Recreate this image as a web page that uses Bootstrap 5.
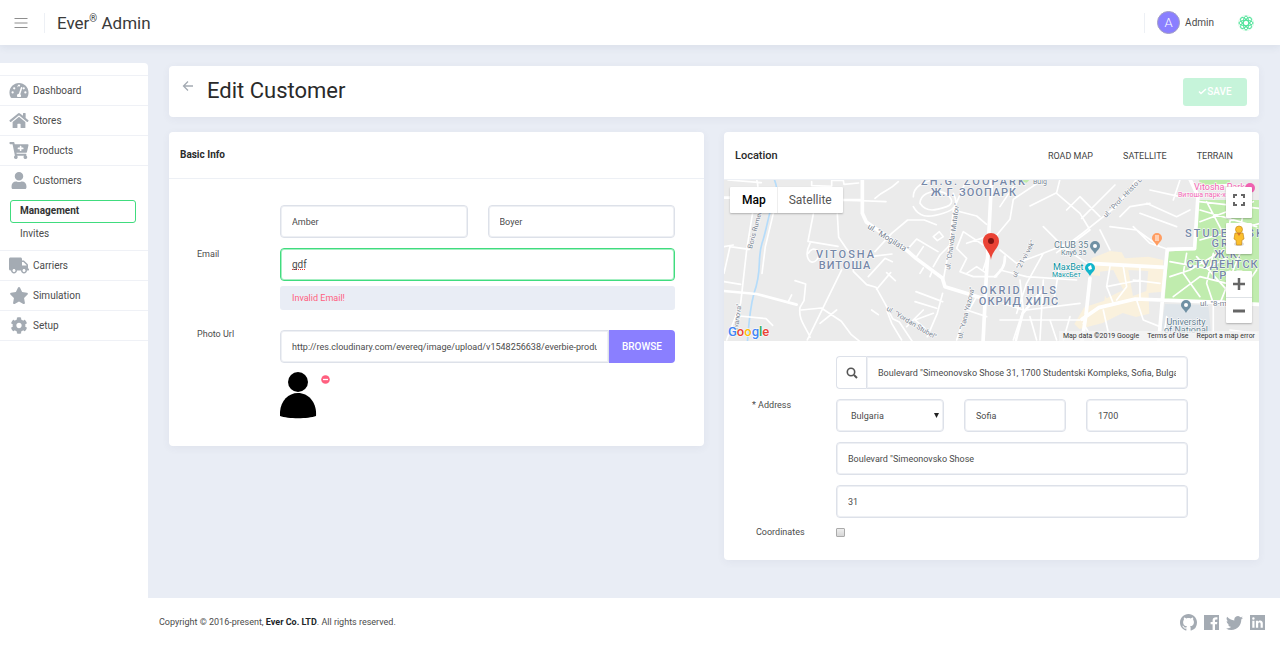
<!DOCTYPE html>
<html lang="en">
<head>
<meta charset="utf-8">
<meta name="viewport" content="width=device-width, initial-scale=1">
<title>Ever Admin - Edit Customer</title>
<link href="https://cdn.jsdelivr.net/npm/bootstrap@5.3.0/dist/css/bootstrap.min.css" rel="stylesheet">
<style>
  body { font: 10px/16px Roboto, "Liberation Sans", sans-serif; color: #4b4b4b; background: #e9edf5; }
  a { color: inherit; text-decoration: none; }
  svg { display: block; }
  .topbar { height: 45px; background: #fff; box-shadow: 0 2px 8px rgba(60, 75, 110, .09); padding: 0 26px 0 14px; position: relative; z-index: 2; }
  .brand { font-size: 17px; line-height: 24px; color: #3a3a3a; }
  .brand sup { font-size: 10px; top: -7px; }
  .sep { width: 1px; height: 20px; background: #edf0f5; }
  .icon-btn { border: 0; padding: 0; background: none; }
  .user-link { gap: 5px; }
  .avatar { width: 23px; height: 23px; border-radius: 50%; background: #8a7fff; border: 1px solid #a39fc4; color: #fff; font-size: 13px; font-weight: 300; }
  .side { width: 148px; margin-top: 18px; padding-top: 12px; background: #fff; border-radius: 0 4px 0 0; flex: none; }
  .side-block { border-top: 1px solid #eff1f6; }
  .side-block:last-child { border-bottom: 1px solid #eff1f6; }
  .side-link { height: 29px; padding-left: 9px; gap: 4px; }
  .side-link svg { width: 20px; height: 17px; fill: #a4abb3; }
  .sub { height: 23px; line-height: 20px; padding: 0 9px; border: 1px solid transparent; border-radius: 3px; margin: 0 12px 0 10px; }
  .sub.current { border-color: #40dc7e; font-weight: 700; color: #333; }
  .sub-list { padding: 5px 0 4px; }
  .panel { background: #fff; border-radius: 4px; box-shadow: 0 2px 8px rgba(60, 75, 110, .06); }
  .panels { gap: 20px; }
  .content-pad { padding: 21px 21px 38px; }
  .title-bar { height: 51px; padding: 0 12px 0 13px; margin-bottom: 15px; }
  .title-bar h1 { font-size: 22px; line-height: 28px; color: #2a2a2a; font-weight: 400; margin: 0 0 2px 13px; }
  .save-btn { width: 64px; height: 28px; border: 0; border-radius: 3px; background: #c6f4da; color: #fff; font-weight: 500; }
  .panel-head { height: 47px; padding: 0 11px; border-bottom: 1px solid #edf0f5; }
  .panel-head h2 { font-size: 10px; line-height: 16px; font-weight: 700; color: #2a2a2a; margin: 0; }
  .map-head { height: 48px; }
  .map-head h2 { font-size: 11px; font-weight: 500; }
  .map-type { border: 0; background: none; padding: 0 15px; font-size: 9px; color: #444; }
  label, .error-note, .copyright { font-size: 9px; }
  .field { display: block; flex: 1 1 0; width: 100%; min-width: 0; height: 33px; padding: 0 11px; border: 1px solid #dde1e9; box-shadow: inset 0 0 0 1px #eef0f4; border-radius: 4px; background-color: #fff; color: #4b4b4b; font-size: 9px; line-height: 16px; outline: 0; }
  .field.typing { font-size: 10px; border-color: #40dc7e; box-shadow: inset 0 0 0 1px #a6efc3; text-decoration: underline dotted #f03030; text-decoration-skip-ink: none; }
  select.field { appearance: none; padding: 0 14px; background: #fff url("data:image/svg+xml,%3Csvg xmlns='http://www.w3.org/2000/svg' width='5' height='5'%3E%3Cpath d='M0 0h5L2.500 5z' fill='%23222'/%3E%3C/svg%3E") no-repeat right 4px center; }
  .stack { display: grid; gap: 10px; }
  .trio { display: flex; gap: 20px; }
  .email-col { padding-top: 10px; }
  .error-note { height: 24px; line-height: 24px; padding-left: 12px; background: #e9edf5; color: #ff5f7f; border-radius: 3px; margin-top: 5px; }
  .browse { width: 66px; height: 33px; border: 0; background: #8a7fff; color: #fff; font-size: 10px; font-weight: 500; border-radius: 0 4px 4px 0; flex: none; }
  .glass { width: 30px; height: 33px; border: 1px solid #dde1e9; border-right: 0; border-radius: 4px 0 0 4px; flex: none; }
  .basic-body { padding: 26px 29px 27px 28px; }
  .basic-label { width: 83px; flex: none; }
  .map-box { height: 161px; position: relative; overflow: hidden; background: #ebebeb; }
  .map-box > svg { width: 100%; height: 100%; }
  .map-ctl { position: absolute; right: 7px; background: #fff; box-shadow: 0 1px 2px rgba(0, 0, 0, .25); border-radius: 1px; }
  .map-ctl button { border: 0; background: none; padding: 0; width: 26px; height: 26px; }
  .map-full { top: 7px; }
  .map-walk { top: 43px; }
  .map-zoom { top: 91px; }
  .map-kind { top: 7px; left: 6px; right: auto; }
  .map-kind button { width: auto; padding: 0 11px; font-size: 12px; color: #565656; }
  .map-kind button.on { color: #000; font-weight: 500; border-right: 1px solid #eee; padding-left: 12px; }
  .map-credit { position: absolute; right: 0; bottom: 0; height: 10px; line-height: 11px; font-size: 7px; color: #333; background: rgba(245, 245, 245, .75); padding: 0 4px; gap: 8px; }
  .loc-body { padding: 15px 71px 22px 28px; }
  .loc-body label { line-height: 12px; }
  .loc-label { width: 84px; flex: none; }
  .addr-row { margin-top: 10px; }
  .tick { appearance: none; width: 9px; height: 9px; border: 1px solid #aaa; border-radius: 1px; background: linear-gradient(#eee, #d6d6d6); margin: 0; display: block; }
  .foot { background: #fff; height: 48px; padding: 0 15px 0 11px; }
  .foot svg { fill: #a4abb3; }
  .social { gap: 7px; }
  .rd { fill: none; stroke: #fff; stroke-linejoin: round; stroke-linecap: round; }
  .area { font-weight: 500; fill: #7688a8; stroke: #fff; stroke-width: 1px; paint-order: stroke; letter-spacing: 2px; font-size: 11px; text-anchor: middle; }
  .area-cy { letter-spacing: 1px; }
  .street { font-size: 7px; fill: #76818f; stroke: #fff; stroke-width: 1px; paint-order: stroke; }
  .street-lg { font-size: 8px; }
  .poi { font-size: 9px; stroke: #fff; stroke-width: 1px; paint-order: stroke; }
  .poi-s { font-size: 7px; }
</style>
</head>
<body class="d-flex flex-column min-vh-100">

<header class="topbar d-flex align-items-center">
  <button class="icon-btn" aria-label="Toggle menu"><svg width="14" height="12" viewBox="0 0 14 12"><path d="M.5 1.500h13M.5 6h13M.5 10.500h13" stroke="#8e8e8e" fill="none"/></svg></button>
  <span class="sep ms-3 me-2"></span>
  <a href="#" class="brand ms-1">Ever<sup>®</sup> Admin</a>
  <span class="sep ms-auto me-2"></span>
  <a href="#" class="user-link d-flex align-items-center ms-1"><span class="avatar d-flex align-items-center justify-content-center">A</span><span>Admin</span></a>
  <button class="icon-btn ms-4" aria-label="Theme"><svg width="16" height="16" viewBox="-8 -8 16 16" fill="none" stroke="#4fe39a" stroke-width="1"><circle r="7.500" stroke="#d5fae5"/><ellipse rx="7" ry="2.700"/><ellipse rx="7" ry="2.700" transform="rotate(45)"/><ellipse rx="7" ry="2.700" transform="rotate(90)"/><ellipse rx="7" ry="2.700" transform="rotate(135)"/></svg></button>
</header>

<div class="d-flex flex-grow-1">
  <nav class="side" aria-label="Main">
    <div class="side-block"><a href="#" class="side-link d-flex align-items-center"><svg viewBox="0 0 576 512"><path fill-rule="evenodd" d="M288 32C129 32 0 161 0 320c0 53 14 102 39 145 6 10 16 15 27 15h444c11 0 21-5 27-15 25-43 39-92 39-145C576 161 447 32 288 32zM96 350a34 34 0 1 1 0-68 34 34 0 0 1 0 68zm48-126a34 34 0 1 1 0-68 34 34 0 0 1 0 68zm110-60a34 34 0 1 1 68-68 34 34 0 0 1-68 10zm118-10c12 4 19 17 15 30l-61 184c25 20 32 48 14 80H238c-26-46 0-92 46-95l58-183c4-13 17-20 30-16zm58 70a34 34 0 1 1 0-68 34 34 0 0 1 0 68zm50 126a34 34 0 1 1 0-68 34 34 0 0 1 0 68z"/></svg>Dashboard</a></div>
    <div class="side-block"><a href="#" class="side-link d-flex align-items-center"><svg viewBox="0 0 576 512"><path d="M280.370 148.260L96 300.110V464a16 16 0 0 0 16 16l112.060-.29a16 16 0 0 0 15.920-16V368a16 16 0 0 1 16-16h64a16 16 0 0 1 16 16v95.640a16 16 0 0 0 16 16.050L464 480a16 16 0 0 0 16-16V300L295.670 148.260a12.190 12.190 0 0 0-15.300 0zM571.600 251.470L488 182.560V44.050a12 12 0 0 0-12-12h-56a12 12 0 0 0-12 12v72.610L318.470 43a48 48 0 0 0-61 0L4.340 251.470a12 12 0 0 0-1.600 16.900l25.500 31A12 12 0 0 0 45.150 301l235.220-193.740a12.190 12.190 0 0 1 15.300 0L530.900 301a12 12 0 0 0 16.900-1.600l25.500-31a12 12 0 0 0-1.700-16.930z"/></svg>Stores</a></div>
    <div class="side-block"><a href="#" class="side-link d-flex align-items-center"><svg viewBox="0 0 576 512"><path d="M504.717 320H211.572l6.545 32h268.418c15.401 0 26.816 14.301 23.403 29.319l-5.517 24.276C523.112 414.668 536 433.828 536 456c0 31.202-25.519 56.444-56.824 55.994-29.823-.429-54.350-24.631-55.155-54.447-.44-16.287 6.085-31.049 16.803-41.548H231.176C241.553 426.165 248 440.326 248 456c0 31.813-26.528 57.431-58.670 55.938-28.540-1.325-51.751-24.385-53.251-52.917-1.158-22.034 10.436-41.455 28.051-51.586L93.883 64H24C10.745 64 0 53.255 0 40V24C0 10.745 10.745 0 24 0h102.529c11.401 0 21.228 8.021 23.513 19.190L159.208 64H551.990c15.401 0 26.816 14.301 23.403 29.319l-47.273 208C525.637 312.246 515.923 320 504.717 320zM408 168h-48v-40c0-8.837-7.163-16-16-16h-16c-8.837 0-16 7.163-16 16v40h-48c-8.837 0-16 7.163-16 16v16c0 8.837 7.163 16 16 16h48v40c0 8.837 7.163 16 16 16h16c8.837 0 16-7.163 16-16v-40h48c8.837 0 16-7.163 16-16v-16c0-8.837-7.163-16-16-16z"/></svg>Products</a></div>
    <div class="side-block"><a href="#" class="side-link d-flex align-items-center"><svg viewBox="0 0 448 512"><path d="M224 256c70.700 0 128-57.300 128-128S294.700 0 224 0 96 57.300 96 128s57.300 128 128 128zm89.600 32h-16.700c-22.200 10.200-46.900 16-72.900 16s-50.600-5.800-72.900-16h-16.700C60.200 288 0 348.200 0 422.400V464c0 26.500 21.500 48 48 48h352c26.500 0 48-21.500 48-48v-41.600c0-74.200-60.200-134.400-134.400-134.400z"/></svg>Customers</a>
      <div class="sub-list"><a href="#" class="sub current d-block">Management</a><a href="#" class="sub d-block">Invites</a></div></div>
    <div class="side-block"><a href="#" class="side-link d-flex align-items-center"><svg viewBox="0 0 640 512"><path d="M624 352h-16V243.900c0-12.700-5.100-24.900-14.100-33.900L494 110.100c-9-9-21.200-14.100-33.900-14.100H416V48c0-26.500-21.500-48-48-48H48C21.500 0 0 21.500 0 48v320c0 26.500 21.500 48 48 48h16c0 53 43 96 96 96s96-43 96-96h128c0 53 43 96 96 96s96-43 96-96h48c8.800 0 16-7.200 16-16v-32c0-8.800-7.200-16-16-16zM160 464c-26.500 0-48-21.500-48-48s21.500-48 48-48 48 21.500 48 48-21.500 48-48 48zm320 0c-26.500 0-48-21.500-48-48s21.500-48 48-48 48 21.500 48 48-21.500 48-48 48zm80-208H416V144h44.100l99.900 99.900V256z"/></svg>Carriers</a></div>
    <div class="side-block"><a href="#" class="side-link d-flex align-items-center"><svg viewBox="0 0 576 512"><path d="M259.300 17.800L194 150.200 47.900 171.500c-26.200 3.800-36.700 36.100-17.700 54.600l105.700 103-25 145.500c-4.500 26.300 23.200 46 46.400 33.700L288 439.600l130.700 68.700c23.200 12.200 50.900-7.400 46.400-33.700l-25-145.500 105.700-103c19-18.500 8.500-50.800-17.700-54.600L382 150.200 316.700 17.800c-11.700-23.600-45.600-23.900-57.400 0z"/></svg>Simulation</a></div>
    <div class="side-block"><a href="#" class="side-link d-flex align-items-center"><svg viewBox="0 0 512 512"><path d="M487.400 315.700l-42.600-24.600c4.300-23.200 4.300-47 0-70.200l42.600-24.600c4.900-2.800 7.100-8.600 5.500-14-11.100-35.600-30-67.800-54.700-94.600-3.800-4.100-10-5.100-14.800-2.300L380.800 110c-17.900-15.400-38.500-27.300-60.800-35.100V25.800c0-5.600-3.900-10.500-9.400-11.700-36.700-8.200-74.300-7.800-109.200 0-5.500 1.200-9.400 6.100-9.400 11.700V75c-22.200 7.900-42.800 19.800-60.800 35.100L88.700 85.500c-4.900-2.800-11-1.900-14.800 2.300-24.700 26.700-43.600 58.900-54.700 94.600-1.700 5.400.6 11.200 5.500 14L67.300 221c-4.300 23.200-4.300 47 0 70.200l-42.600 24.600c-4.900 2.800-7.100 8.600-5.500 14 11.100 35.600 30 67.800 54.700 94.600 3.800 4.100 10 5.100 14.800 2.300l42.600-24.600c17.900 15.400 38.500 27.300 60.800 35.100v49.200c0 5.600 3.900 10.500 9.400 11.700 36.700 8.200 74.300 7.800 109.200 0 5.500-1.200 9.400-6.100 9.400-11.700v-49.200c22.200-7.900 42.800-19.800 60.800-35.100l42.600 24.600c4.900 2.800 11 1.900 14.800-2.300 24.700-26.700 43.600-58.900 54.700-94.600 1.500-5.500-.7-11.300-5.600-14.100zM256 336c-44.100 0-80-35.900-80-80s35.900-80 80-80 80 35.900 80 80-35.900 80-80 80z"/></svg>Setup</a></div>
  </nav>

  <div class="d-flex flex-column flex-grow-1 overflow-hidden">
    <main class="content-pad flex-grow-1">
      <div class="panel title-bar d-flex align-items-center">
        <a href="#" aria-label="Back" class="mb-2 pb-1"><svg width="12" height="12" viewBox="0 0 12 12" fill="none" stroke="#a4abb3" stroke-width="1.300"><path d="M11 6H1.500M6 1.500L1.500 6 6 10.500"/></svg></a>
        <h1>Edit Customer</h1>
        <button class="save-btn ms-auto d-flex align-items-center justify-content-center" disabled><svg width="9" height="7" viewBox="0 0 9 7" fill="none" stroke="#fff" stroke-width="1.500"><path d="M1 3.500l2 2L8 1"/></svg>SAVE</button>
      </div>

      <div class="row g-0 panels flex-nowrap align-items-start">
        <section class="panel col">
          <div class="panel-head d-flex align-items-center"><h2>Basic Info</h2></div>
          <form class="basic-body">
            <div class="d-flex">
              <span class="basic-label"></span>
              <div class="trio flex-grow-1">
                <input class="field" value="Amber" aria-label="First name"><input class="field" value="Boyer" aria-label="Last name">
              </div>
            </div>
            <div class="d-flex">
              <label class="basic-label mt-2" for="email">Email</label>
              <div class="email-col flex-grow-1">
                <input id="email" class="field typing" value="gdf" spellcheck="false">
                <div class="error-note">Invalid Email!</div>
              </div>
            </div>
            <div class="d-flex mt-3">
              <label class="basic-label" for="photo">Photo Url</label>
              <div class="flex-grow-1">
                <div class="d-flex mt-1"><input id="photo" class="field rounded-end-0" value="http://res.cloudinary.com/evereq/image/upload/v1548256638/everbie-products-images"><button type="button" class="browse">BROWSE</button></div>
                <div class="d-flex mt-2">
                  <svg width="37" height="48" viewBox="0 0 37 48"><circle cx="18" cy="11" r="10"/><path d="M0 45C-1 32 7 22 18 22s19 10 18 23c-8 3-28 3-36 0z"/></svg>
                  <button type="button" class="icon-btn align-self-start mt-1 ms-1" aria-label="Remove photo"><svg width="9" height="9" viewBox="0 0 9 9"><circle cx="4.500" cy="4.500" r="4.300" fill="#ff5f7f"/><path d="M2 4.500h5" stroke="#fff" stroke-width="1.300"/></svg></button>
                </div>
              </div>
            </div>
          </form>
        </section>

        <section class="panel col">
          <div class="panel-head map-head d-flex align-items-center"><h2>Location</h2>
            <div class="ms-auto"><button class="map-type">ROAD MAP</button><button class="map-type">SATELLITE</button><button class="map-type">TERRAIN</button></div></div>
          <div class="map-box">
            <svg viewBox="0 0 535 161" preserveAspectRatio="xMidYMid slice">
              <rect width="535" height="161" fill="#ebebeb"/>
              <g transform="translate(-4 -50) scale(.3333)">
                <!-- parks, commercial blocks, campus -->
                <g transform="translate(840 0)">
                  <path fill="#c0ecae" d="M598 148h92v22h-40l-52 5zM597 210h190v310h-95l-20-10H494l12-145 75-8zM40 148h50l-10 10z"/>
                  <path fill="#faf1dd" d="M275 385l55-22 35 4 10 18 70-5 45 10-2 95-42 4 2 62-40 10-40-12-60 30-70 18-15-15 30-50 60-20 10-72-48-4z"/>
                  <path fill="#dfe5ea" d="M495 522l130 3 10 100H480z"/>
                  <path fill="#ebebeb" d="M300 425l40-5 30 60-50 25-20-30zM385 420l60 3-6 60-40 15z"/>
                </g>
                <path d="M160 140c8 22 14 34 6 58-20 45-24 95-40 142-16 54 2 78-24 150-14 52-16 96-20 150" fill="none" stroke="#b5dcfa" stroke-width="5"/>
                <!-- minor streets -->
                <g class="rd" stroke-width="5">
                  <path d="M110 148c10 40 0 70-12 100L80 360 62 520 20 630M12 430l18-80 58 8M12 455l50 8M58 558l80 8 20 20M24 150l100 8M10 350l30-5M160 250l-24 100-10 80"/>
                  <path d="M280 252l-16 82 90 15M352 252l4 70 22 32 22 30v40l40 40 28 8 30 54 20 40 20 10 40 60M270 340c-20 40 0 70 20 50s-10-50-25-20M365 420L262 630M225 452l32 10-5 50-12 20c-6 40 20 60 30 90M205 515l10-20M244 540l60-6 60 40 30 40 25 20M300 580l50-40M368 210l130 5M275 155v12l60 2v-18h35l2 12 44-4"/>
                  <path d="M465 365l50-55 48-40h50l36 14M450 380l66-8M445 440l50-55 22 10M500 428l26 24M470 478l42-50M565 355l25-28 64 38M590 380l20-30M640 320l18-15 12 15-18 12zM640 410l20-35 30-30M600 430l10-16M630 440l8-20"/>
                  <path d="M465 205c30-28 40-20 70-50M580 200c0-30 30-45 60-50M580 230c16 30 40 36 90 20s40-40 30-60M600 220c20 30 50 20 80 10s10-40-20-45-60 10-60 35M700 240l-10 100-20 110M700 240l35-80M700 240l70 18 30 25M790 345l-60-40-20 50 30 30-20 40 40 15 70 0M800 320l-60 20M740 430l30-20 30 20M668 490l-16 60-30 70M668 515l-80-30M650 535l-65-20M640 550l-55 20 30 25M770 500l-40 70-20 60M800 560l-60-20M560 590l50-50M455 540l20 14M500 540l15 40 30 50"/>
                </g>
                <g class="rd" stroke-width="5" transform="translate(840 0)">
                  <path d="M130 148l-90 60-10 60-50 60-30 90M180 148l-10 40-80 40M170 190l70 60 30 50-40 30-100 40-50 90-30 90M410 148l-60 80-100 80-80 60M345 165l-100 100M200 240l40-40 60 60M360 260l30-30 60-10M330 290l80 10 70 50M400 290l50 50 60 20M450 180l90 20M440 220l90 40 40-20M420 250l110 40M540 150l-20 60M300 300l30 60M130 290l60 60 70 50M0 360l50 40 80-30M0 420l80 20 150 10M60 450l10 90-30 90M130 450l-10 180M80 540l160-20M180 400l-20 120M10 520l60 20M0 570h240M330 410l-10 60 20 50M370 410l10 60-30 40M420 410v100M400 450l80 10M320 470l100-20M410 510l20 60 50 20M310 540l20 90M250 580l30 50M500 560l-10 70M640 520v110M690 600l80 10M0 230l40-60M90 560l20 70M150 570l20 60M210 560l-20 70"/>
                  <path d="M598 215l180 20M600 240l170 50M600 275l80-30 80-30M600 330l180-50M620 215l60 115M680 330l20-110M590 380l100 110M510 395l110 20 60-30M560 370l-10 60 50 70M510 440l60-20 100-60M520 500l80-60 80 20M640 370l-20 90 20 60M720 370l-60 150M700 520l70-100M740 200l-30 150"/>
                </g>
                <!-- main roads -->
                <g class="rd">
                  <path stroke-width="11" d="M427 148v102l12 26 120 84 30 26 78 58 8 26 110 34M815 148l-12 232-4 60-10 200"/>
                  <path stroke-width="8" d="M0 203h32M0 482l110 10 120 32M368 210h55"/>
                  <g transform="translate(840 0)">
                    <path stroke-width="11" d="M270 445l-12 110-12 80M570 148l24 50-10 158-82 2-12 120-14 160M246 568l50-35 110-26 200 8 170 8M270 400l224 12"/>
                    <path stroke-width="8" d="M-15 440c20-20 30-30 30-60M48 630l20-80 60-70M598 170l90-5"/>
                  </g>
                </g>
              </g>
              <g class="street">
                <text transform="translate(28 69) rotate(-75)">Boris Rumenov</text>
                <text transform="translate(14 150) rotate(-82)">Ivanova"</text>
                <text class="street-lg" transform="translate(143 48) rotate(32)">ul. "Mogilata"</text>
                <text transform="translate(162 130) rotate(31)">ul. "Yordan Stubel"</text>
                <text transform="translate(226 90) rotate(-82)">ul. "Chavdar Mutafov"</text>
                <text transform="translate(238 159) rotate(-76)">ul. "Yana Yazova"</text>
                <text transform="translate(292 98) rotate(-62)">ul. "21-vi vek"</text>
                <text transform="translate(382 38) rotate(-46)">ul. "Prof. Hristo Danov"</text>
                <text class="street-lg" x="476" y="126">ul. "8-mi dek</text>
                <text x="309" y="4">Bulg</text>
              </g>
              <g class="area">
                <text x="250" y="5">ZH.G. ZOOPARK</text><text x="250" y="16" class="area-cy">Ж.Г. ЗООПАРК</text>
                <text x="122" y="78">VITOSHA</text><text x="121" y="89" class="area-cy">ВИТОША</text>
                <text x="295" y="114">OKRID HILS</text><text x="295" y="125" class="area-cy">ОКРИД ХИЛС</text>
                <text x="501" y="57">STUDENTSK</text><text x="506" y="67">GRAD</text><text x="504" y="78" class="area-cy">Ж.К.</text><text x="503" y="88" class="area-cy">СТУДЕНТСКИ</text><text x="504" y="99" class="area-cy">ГРАД</text>
              </g>
              <g class="poi">
                <text x="330" y="68" fill="#5f7d8e">CLUB 35</text><text class="poi-s" x="337" y="75" fill="#5f7d8e">Клуб 35</text>
                <text x="329" y="90" fill="#0a93a3">MaxBet</text><text class="poi-s" x="328" y="97" fill="#0a93a3">МаксБет</text>
                <text x="470" y="10" fill="#f062b0">Vitosha Park</text><text class="poi-s" x="454" y="17" fill="#f062b0">Витоша парк-х</text>
                <text text-anchor="middle" fill="#5f7d8e"><tspan x="462" y="145">University</tspan><tspan x="462" y="153">of National</tspan></text>
              </g>
              <g>
                <path d="M371 74c-2-4-5-5-5-8a5 5 0 0 1 10 0c0 3-3 4-5 8z" fill="#7091a4"/><circle cx="371" cy="66" r="2" fill="#fff"/>
                <path d="M366 96c-2-4-5-5-5-8a5 5 0 0 1 10 0c0 3-3 4-5 8z" fill="#12b5cb"/><path d="M364 87l3-2 1 4-3 1z" fill="#fff"/>
                <path d="M433 66c-2-4-5-5-5-8a5 5 0 0 1 10 0c0 3-3 4-5 8z" fill="#ff9d62"/><path d="M432 55v6M434 55v6" stroke="#fff"/>
                <path d="M462 133c-2-4-5-5-5-8a5 5 0 0 1 10 0c0 3-3 4-5 8z" fill="#7091a4"/><circle cx="462" cy="125" r="2" fill="#fff"/>
                <circle cx="526" cy="8" r="5" fill="#f062b0"/>
                <path d="M267 80c-1-9-8-12-8-19a8 8 0 0 1 16 0c0 7-7 10-8 19z" fill="#ea4335"/><circle cx="267" cy="61" r="3" fill="#811411"/>
              </g>
              <text x="4" y="156" font-size="13" font-weight="500" stroke="#fff" stroke-width="1" paint-order="stroke"><tspan fill="#4285f4">G</tspan><tspan fill="#ea4335">o</tspan><tspan fill="#fbbc05">o</tspan><tspan fill="#4285f4">g</tspan><tspan fill="#34a853">l</tspan><tspan fill="#ea4335">e</tspan></text>
            </svg>
            <div class="map-ctl map-kind d-flex"><button class="on">Map</button><button>Satellite</button></div>
            <div class="map-ctl map-full"><button aria-label="Full screen"><svg class="m-auto" width="12" height="12" viewBox="0 0 12 12" fill="none" stroke="#666" stroke-width="2"><path d="M1 4V1h3M8 1h3v3M11 8v3H8M4 11H1V8"/></svg></button></div>
            <div class="map-ctl map-walk"><button aria-label="Street view"><svg class="m-auto" width="14" height="22" viewBox="0 0 14 22"><ellipse cx="7" cy="19" rx="5" ry="2" fill="#ddd"/><path d="M3 8h8l1 6-2 1-.5 5h-5L4 15l-2-1z" fill="#fbbf2d" stroke="#c78b1b" stroke-width=".7"/><path d="M5 8l2 3 2-3z" fill="#d5732a"/><circle cx="7" cy="4.500" r="3.500" fill="#fbbf2d" stroke="#c78b1b" stroke-width=".7"/></svg></button></div>
            <div class="map-ctl map-zoom d-flex flex-column"><button aria-label="Zoom in"><svg class="m-auto" width="12" height="12" viewBox="0 0 12 12"><path d="M0 6h12M6 0v12" stroke="#666" stroke-width="2.500"/></svg></button><button class="border-top" aria-label="Zoom out"><svg class="m-auto" width="12" height="12" viewBox="0 0 12 12"><path d="M0 6h12" stroke="#666" stroke-width="3"/></svg></button></div>
            <div class="map-credit d-flex"><span>Map data ©2019 Google</span><a href="#">Terms of Use</a><a href="#">Report a map error</a></div>
          </div>
          <form class="loc-body">
            <div class="d-flex">
              <span class="loc-label"></span>
              <span class="glass d-flex align-items-center justify-content-center"><svg width="12" height="12" viewBox="0 0 12 12" fill="none" stroke="#555"><circle cx="5" cy="5" r="3.700" stroke-width="1.600"/><path d="M8 8l3 3" stroke-width="2"/></svg></span><input class="field rounded-start-0" aria-label="Find address" value="Boulevard &quot;Simeonovsko Shose 31, 1700 Studentski Kompleks, Sofia, Bulgaria">
            </div>
            <div class="addr-row d-flex">
              <label class="loc-label" for="country">* Address</label>
              <div class="stack flex-grow-1">
                <div class="trio"><select id="country" class="field"><option>Bulgaria</option></select><input class="field" aria-label="City" value="Sofia"><input class="field" aria-label="Postcode" value="1700"></div>
                <input class="field" aria-label="Street" value="Boulevard &quot;Simeonovsko Shose">
                <input class="field" aria-label="House" value="31">
              </div>
            </div>
            <div class="d-flex align-items-center mt-2"><label class="loc-label ps-1" for="coords">Coordinates</label><input id="coords" type="checkbox" class="tick"></div>
          </form>
        </section>
      </div>
    </main>

    <footer class="foot d-flex align-items-center">
      <span class="copyright">Copyright © 2016-present, <a href="#" class="fw-bold text-dark">Ever Co. LTD</a>. All rights reserved.</span>
      <div class="social ms-auto d-flex align-items-center">
        <a href="#" aria-label="GitHub"><svg width="17" height="17" viewBox="0 0 16 16"><path d="M8 0C3.580 0 0 3.580 0 8c0 3.540 2.290 6.530 5.470 7.590.4.070.550-.170.550-.380 0-.190-.010-.820-.010-1.490-2.010.370-2.530-.490-2.690-.940-.090-.230-.480-.940-.820-1.130-.280-.150-.680-.520-.010-.530.630-.010 1.080.580 1.230.820.720 1.210 1.870.870 2.330.660.070-.520.280-.870.510-1.070-1.780-.200-3.640-.890-3.640-3.950 0-.870.310-1.590.820-2.150-.080-.200-.360-1.020.080-2.120 0 0 .670-.210 2.200.820.640-.180 1.320-.270 2-.270.680 0 1.360.090 2 .270 1.530-1.040 2.200-.820 2.200-.820.440 1.100.160 1.920.080 2.120.510.560.820 1.270.820 2.150 0 3.070-1.870 3.750-3.650 3.950.290.250.540.730.540 1.480 0 1.070-.010 1.930-.010 2.200 0 .210.150.460.550.380A8.013 8.013 0 0016 8c0-4.420-3.580-8-8-8z"/></svg></a>
        <a href="#" aria-label="Facebook"><svg width="15" height="15" viewBox="0 0 15 15"><path d="M0 0h15v15h-4V9.200h2l.3-2.300H11V5.500c0-.7.300-1.100 1.200-1.100h1.200V2.300c-3-.4-4.800.4-4.800 3v1.600h-2v2.300h2V15H0z"/></svg></a>
        <a href="#" aria-label="Twitter"><svg width="17" height="17" viewBox="0 0 16 16"><path d="M5.026 15c6.038 0 9.341-5.003 9.341-9.334 0-.14 0-.282-.006-.422A6.685 6.685 0 0 0 16 3.542a6.658 6.658 0 0 1-1.889.518 3.301 3.301 0 0 0 1.447-1.817 6.533 6.533 0 0 1-2.087.793A3.286 3.286 0 0 0 7.875 6.030a9.325 9.325 0 0 1-6.767-3.429 3.289 3.289 0 0 0 1.018 4.382A3.323 3.323 0 0 1 .64 6.575v.045a3.288 3.288 0 0 0 2.632 3.218 3.203 3.203 0 0 1-.865.115 3.230 3.230 0 0 1-.614-.057 3.283 3.283 0 0 0 3.067 2.277A6.588 6.588 0 0 1 .78 13.580a6.320 6.320 0 0 1-.78-.045A9.344 9.344 0 0 0 5.026 15z"/></svg></a>
        <a href="#" aria-label="LinkedIn"><svg width="15" height="15" viewBox="0 0 15 15"><path fill-rule="evenodd" d="M0 0h15v15H0zM2.300 5.700h2.200v7H2.300zM3.400 2.200a1.200 1.200 0 1 0 0 2.500 1.200 1.200 0 0 0 0-2.500zM5.900 5.700H8v1c1.300-2 4.800-1.600 4.800 1.600v4.400h-2.200V8.900c0-2-2.400-1.800-2.400 0v3.800H5.900z"/></svg></a>
      </div>
    </footer>
  </div>
</div>
<script src="https://cdn.jsdelivr.net/npm/bootstrap@5.3.0/dist/js/bootstrap.bundle.min.js"></script>
</body>
</html>
